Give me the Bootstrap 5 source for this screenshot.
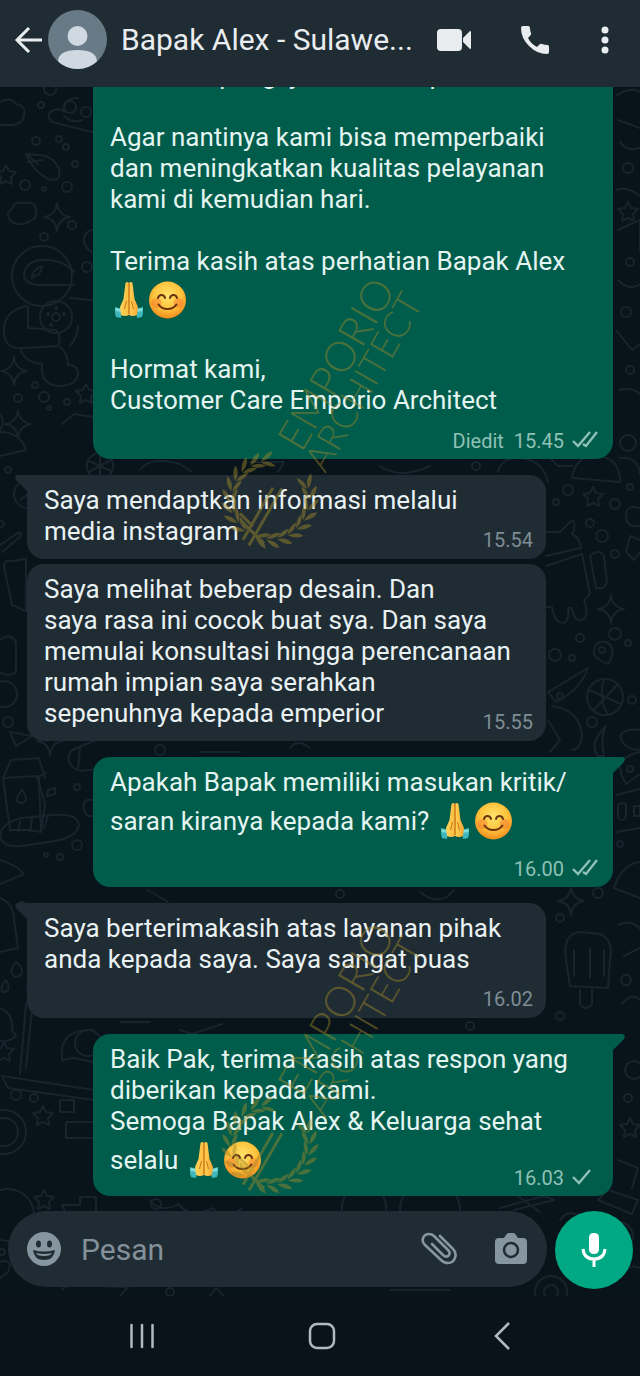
<!DOCTYPE html>
<html lang="id">
<head>
<meta charset="utf-8">
<meta name="viewport" content="width=device-width, initial-scale=1">
<title>Bapak Alex</title>
<link href="https://cdn.jsdelivr.net/npm/bootstrap@5.3.0/dist/css/bootstrap.min.css" rel="stylesheet">
<style>
  body { background: #08131a; font-family: Roboto, "Liberation Sans", sans-serif; color: #e9f1f3; }
  .topbar { height: 87px; background: #202c33; padding: 0 7px 8px 12px; }
  .topbar h1 { font-size: 30px; line-height: 40px; margin-left: 14px; font-weight: 400; color: #e9edef; }
  .icon-btn { border: 0; background: none; padding: 0; flex: none; display: flex; align-items: center; justify-content: center; color: #e9edef; }
  .w-back { width: 36px; } .w-video { width: 82px; } .w-call { width: 80px; } .w-more { width: 60px; }
  .w-72 { width: 72px; } .w-nav { width: 180px; height: 80px; }
  .chat { min-height: 0; background: #08131a; }
  .wallpaper { fill: none; stroke: #18242c; stroke-width: 2; stroke-linejoin: round; stroke-linecap: round; }
  .log { min-height: 0; gap: 16px; padding: 0 27px 15px; }
  .bubble { position: relative; flex: none; border-radius: 17px; padding: 10px 13px 10px 17px; font-size: 26px; line-height: 31px; }
  .bubble::after { content: ""; display: block; clear: both; }
  .sent { background: #005c4b; margin-left: 66px; padding-right: 15px; color: #e4f4f1; }
  .got { background: #202c33; margin-right: 67px; }
  .follow { margin-top: -11px; }
  .tail-r { border-top-right-radius: 0; }
  .tail-l { border-top-left-radius: 0; }
  .tail-r::before, .tail-l::before { content: ""; position: absolute; top: 0; width: 13px; height: 17px; }
  .tail-r::before { left: 100%; background: #005c4b; clip-path: polygon(0 0, 10px 0, 12px 2px, 11px 5px, 0 16px); }
  .tail-l::before { right: 100%; background: #202c33; clip-path: polygon(13px 0, 3px 0, 1px 2px, 2px 5px, 13px 16px); }
  .stamp { float: right; height: 18px; margin-top: 15px; padding-left: 16px; font-size: 20px; line-height: 18px; color: #7f8d95; }
  .sent .stamp { color: #8fc1b6; }
  .stamp.low { margin-top: 31px; }
  .stamp svg { width: 26px; height: 18px; margin-left: 3px; vertical-align: -1px; }
  .emo { width: 38px; height: 46px; vertical-align: -14px; }
  .mark-svg { position: absolute; left: 222px; width: 204px; height: 284px; pointer-events: none; overflow: visible; fill: #a08a2c; stroke: none; opacity: .46; }
  .mark-a { top: 183px; } .mark-b { top: 828px; }
  .mark-svg .big-line { font: 300 42px Lato, sans-serif; }
  .mark-svg .low-line { font: 300 37px Lato, sans-serif; }
  .composer { padding: 0 7px 7px 8px; gap: 8px; }
  .pill { height: 76px; border-radius: 38px; background: #202c33; min-width: 0; }
  .pill .icon-btn { color: #8696a0; height: 76px; }
  .pill input { border: 0; background: none; outline: 0; padding: 1px 1px 0; min-width: 0; font-size: 30px; color: #e9edef; }
  .pill input::placeholder { color: #83919a; opacity: 1; }
  .mic { width: 78px; height: 78px; border-radius: 50%; background: #00a884; color: #fff; }
  .sysbar { height: 80px; background: #0b131a; padding-left: 4px; }
  .sysbar .icon-btn { color: #b4b9bf; }
</style>
</head>
<body>
<svg width="0" height="0" class="position-absolute" aria-hidden="true">
  <defs>
    <radialGradient id="gFace" cx=".5" cy=".38" r=".62"><stop offset="0" stop-color="#ffe36b"/><stop offset=".6" stop-color="#fdc33c"/><stop offset="1" stop-color="#f28c1c"/></radialGradient>
    <linearGradient id="gHand" x1="0" x2="1"><stop offset="0" stop-color="#ffd45a"/><stop offset=".45" stop-color="#fbc043"/><stop offset=".5" stop-color="#dd8a22"/><stop offset=".56" stop-color="#ffce50"/><stop offset="1" stop-color="#f5a732"/></linearGradient>
    <symbol id="smile" viewBox="0 0 38 46">
      <circle cx="19.500" cy="23" r="18.500" fill="url(#gFace)"/>
      <circle cx="8.500" cy="26" r="5" fill="#f4682c" opacity=".4"/><circle cx="30.500" cy="26" r="5" fill="#f4682c" opacity=".4"/>
      <path d="M10 21c1-4 6-4 7 0M22 21c1-4 6-4 7 0M10.500 27.500c4 6 14 6 18 0" fill="none" stroke="#6b3410" stroke-width="2" stroke-linecap="round"/>
    </symbol>
    <symbol id="pray" viewBox="0 0 38 46">
      <path d="M5 30l7 2-1 9-5-1-1-4z M33 30l-7 2 1 9 5-1 1-4z" fill="#3fb8bd"/>
      <path d="M5.500 31l6 1 0 3-6-1zM32.500 31l-6 1 0 3 6-1z" fill="#7fdcd8"/>
      <path d="M15.500 6q2-2 3.500 0q1.500-2 3.500 0l2 16 3.500 8-1 8q-4 2-8 0q-4 2-8 0l-1-8 3.500-8z" fill="url(#gHand)"/>
      <path d="M19 6v31M16.500 24l-2 8M21.500 24l2 8" stroke="#c9741b" stroke-width="1" fill="none"/>
    </symbol>
    <symbol id="ticks2" viewBox="0 0 26 18"><path d="M1 10l5 5L18 1M11 13l3 2L25 1" fill="none" stroke="currentColor" stroke-width="2.400"/></symbol>
    <symbol id="tick1" viewBox="0 0 26 18"><path d="M1 9l6 6L18 2" fill="none" stroke="currentColor" stroke-width="2.400"/></symbol>
    <g id="leafpair"><path d="M-4-42Q2-51 10-51Q7-43-4-42ZM-4-41Q3-34 11-35Q6-42-4-41Z"/></g>
    <g id="branch">
      <use href="#leafpair" transform="rotate(-76)"/><use href="#leafpair" transform="rotate(-60)"/><use href="#leafpair" transform="rotate(-44)"/><use href="#leafpair" transform="rotate(-28)"/><use href="#leafpair" transform="rotate(-12)"/><use href="#leafpair" transform="rotate(4)"/><use href="#leafpair" transform="rotate(20)"/><use href="#leafpair" transform="rotate(36)"/><use href="#leafpair" transform="rotate(52)"/>
    </g>
    <g id="emblem">
      <g transform="scale(.94)"><use href="#branch"/><use href="#branch" transform="scale(1 -1)"/></g>
      <path d="M-48-5H12v3H-48zM-50 3H16v3H-50zM-34-16l3 1-8 32-3-1zM-28-20l3 1-5 18-3-1z"/>
    </g>
    <path id="spark" d="M0-14Q1-2 13 0Q1 2 0 14Q-1 2-13 0Q-1-2 0-14Z"/>
    <path id="star" d="M0-10l3 6 7 1-5 5 1 7-6-3-6 3 1-7-5-5 7-1Z"/>
  </defs>
</svg>

<div class="d-flex flex-column vh-100 overflow-hidden">
  <header class="topbar d-flex align-items-center flex-shrink-0">
    <button class="icon-btn w-back justify-content-start" aria-label="Kembali"><svg width="32" height="28" viewBox="0 0 32 28" fill="none" stroke="currentColor" stroke-width="3"><path d="M30 14H5M17 2L5 14l12 12"/></svg></button>
    <svg class="flex-shrink-0" width="59" height="59" viewBox="0 0 59 59" role="img" aria-label="Foto profil"><defs><clipPath id="cAv"><circle cx="29.500" cy="29.500" r="29.500"/></clipPath></defs><g clip-path="url(#cAv)"><path fill="#687a86" d="M0 0h59v59H0z"/><circle cx="29.500" cy="26" r="10" fill="#d0d9e1"/><path d="M10 52q0-12 19.500-12T49 52v8H10z" fill="#d0d9e1"/></g></svg>
    <h1 class="flex-grow-1 mb-0 text-nowrap">Bapak Alex - Sulawe...</h1>
    <button class="icon-btn w-video" aria-label="Panggilan video"><svg width="34" height="24" viewBox="0 0 34 24" fill="currentColor"><rect y="1" width="25" height="22" rx="4"/><path d="M26 10l7-7q1 0 1 1v16q0 1-1 1l-7-7z"/></svg></button>
    <button class="icon-btn w-call" aria-label="Panggilan suara"><svg width="30" height="30" viewBox="0 0 30 30" fill="currentColor"><path d="M3 1h5q2 0 2 2 0 3 1 5 .5 1.500-.7 2.600L8 13q3 6 9 9l2.500-2.500Q20.600 18.400 22 19q2.500 1 5.500 1 1.500 0 1.500 2v5q0 2-2 2Q17 29 9 21T1 3q0-2 2-2z"/></svg></button>
    <button class="icon-btn w-more" aria-label="Menu"><svg width="8" height="28" viewBox="0 0 8 28" fill="currentColor"><circle cx="4" cy="4" r="3.500"/><circle cx="4" cy="14" r="3.500"/><circle cx="4" cy="24" r="3.500"/></svg></button>
  </header>

  <main class="chat position-relative flex-grow-1 d-flex flex-column overflow-hidden">
    <svg class="wallpaper position-absolute top-0 start-0 w-100 h-100" viewBox="0 87 640 1209" preserveAspectRatio="xMidYMid slice" aria-hidden="true">
      <!-- left edge -->
      <path d="M0 102q10-6 16 2q10 2 8 10q0 10-12 11H0M52 122q-8-8 2-12q8-2 10 2q-2-14 14-14M52 122l40 10M64 116q8 8 18 4"/>
      <circle cx="70" cy="107" r="6"/><circle cx="86" cy="112" r="5"/><circle cx="50" cy="89" r="6"/><circle cx="41" cy="105" r="3"/>
      <path d="M26 154q6 16 22 25q14 4 11-10q-6-14-22-14zM28 162l14-2M26 154l12 10"/>
      <circle cx="36" cy="141" r="4"/><circle cx="59" cy="139" r="3"/><circle cx="66" cy="147" r="3"/><circle cx="25" cy="185" r="5"/><circle cx="67" cy="187" r="5"/><circle cx="44" cy="189" r="2"/><circle cx="75" cy="164" r="3"/>
      <use href="#star" x="6" y="175"/><use href="#spark" x="57" y="217"/>
      <path d="M12 222q-8-8 0-13q2-8 12-6q12-2 12 8q2 8-6 10q-8 6-18 1z"/>
      <circle cx="72" cy="225" r="4"/><circle cx="44" cy="237" r="4"/><circle cx="87" cy="267" r="5"/>
      <path d="M92 230q-8 2-8 10t8 12"/>
      <circle cx="42" cy="276" r="30"/><path d="M74 285H40q-14 0-16-9q0-12 14-16q24-2 36 12M32 278q0-8 10-12q-1 10-8 10z"/>
      <circle cx="56" cy="317" r="16"/><circle cx="56" cy="317" r="4"/><circle cx="56" cy="308" r="1"/><circle cx="64" cy="314" r="1"/><circle cx="48" cy="314" r="1"/><circle cx="51" cy="325" r="1"/>
      <path d="M28 306q-26 4-24 28q2 16 20 14l34-2q4-10-2-16l-28-2zM20 348q4 14 22 16q-2 20 16 22q20 0 20-14q-2-8-10-7q0-12-8-18M70 298l22 2M70 346q8-10 8-20"/>
      <use href="#spark" x="14" y="371"/><circle cx="44" cy="397" r="5"/><circle cx="18" cy="398" r="4"/><circle cx="35" cy="385" r="3"/><circle cx="67" cy="402" r="3"/><circle cx="49" cy="408" r="2"/><use href="#star" x="86" y="394"/>
      <use href="#spark" x="18" y="424"/><path d="M0 456l26-6q-6-18-26-18M62 424l12-10 20 3M0 414q6 8 0 16"/><circle cx="100" cy="466" r="13"/><path d="M100 454v24M89 461l22 10M89 472l22-12"/>
      <circle cx="28" cy="494" r="14"/><path d="M28 484v10l-8 6M0 545l18-12q4-2 2 4L2 552M4 566q0-6 8-5l14-2v52l-14-6zM0 520q8 4 0 8"/>
      <circle cx="8" cy="470" r="3"/><circle cx="4" cy="694" r="13"/><circle cx="8" cy="722" r="5"/><path d="M0 640q10-8 16 2v30q-8 6-16 0M10 732l22 4-16 10z"/><use href="#spark" x="50" y="741"/>
      <path d="M3 778l34-2 8 28-4 28-12-2H10zM3 778l8-18 28-2 6 20M41 832l-2-54M38 777l8-4M22 790q-10 12 0 13q8-2 0-13zM48 790l7-2v6l-8 2z"/>
      <path d="M72 750q-6 6-2 14q4 6 12 7l12-2M72 750l24-10M80 748l-2 22"/>
      <path d="M0 836q2-14 22-18l30-3q26-2 27 10q-2 12-24 16l-34 5Q2 848 0 836M18 832l2-10M30 832l2-14M44 828l4-12M92 800q-10-2-8 8t8 8"/>
      <circle cx="77" cy="787" r="3"/><circle cx="77" cy="845" r="5"/><circle cx="60" cy="857" r="3"/><circle cx="46" cy="855" r="2"/><circle cx="22" cy="906" r="4"/>
      <path d="M0 898q14 6 14 22l4 28-18 4M0 860q18 6 24 14L0 884M16 962q-8 10-2 14q6 2 8-4q0-6-6-10M6 980q-8 10-2 12q6 0 4-8zM40 968q4 10 12 11q14-4 12-14M78 968q-6 20 10 24M0 1008q14 6 12 22l4 6q-10 8-16 4"/>
      <circle cx="54" cy="990" r="4"/><circle cx="30" cy="989" r="3"/><use href="#star" x="4" y="1052"/>
      <path d="M20 1074l6-70q2-6 8-5l62 8M26 1068l6-58 64 6M2 1076l92 14M2 1076l6 12 86 12"/><path d="M62 1060q-4-32 32-30M62 1060l12-2 20 4"/><circle cx="88" cy="1043" r="13"/>
      <circle cx="16" cy="1095" r="5"/><circle cx="34" cy="1098" r="4"/><use href="#star" x="43" y="1116"/><circle cx="4" cy="1132" r="22"/><circle cx="4" cy="1132" r="14"/><path d="M60 1100h14v12H60zM66 1122h28v16H66z"/>
      <circle cx="8" cy="1215" r="26"/><use href="#star" x="44" y="1200"/><path d="M62 1205h18v-8h16v20H68zM0 1262q14-4 8 10l-8 6M62 1290q4-6 12-5l54 2-8 9"/><circle cx="2" cy="1252" r="3"/><circle cx="170" cy="1292" r="4"/>
      <!-- gaps between the bubbles -->
      <path d="M150 1200q10 14 28 4q14 16 34 4q14 14 30 0M140 470q10-14 40-6l12 8M250 462h34l-6 10M380 466q20 14 50 0M148 890l20 12M200 752h40M290 748q8-10 20 0M420 892q20 16 34-2M180 1030l12 4 30-10M120 1022h30"/>
      <circle cx="156" cy="1204" r="5"/><circle cx="364" cy="1207" r="22"/><circle cx="430" cy="1210" r="30"/><path d="M500 1208l44-12 10 4-40 10"/><circle cx="476" cy="466" r="4"/><circle cx="340" cy="894" r="4"/><circle cx="160" cy="750" r="5"/><circle cx="470" cy="1026" r="4"/>
      <!-- right edge -->
      <path d="M616 96q14-10 24-4M618 120l22 8M620 142q6 10 20 6M616 190q12-4 24 6M618 230l22-10v30M618 280q12 12 22 4M616 330l16 20 8-6M620 390q10-4 20 4"/><circle cx="628" cy="168" r="5"/><circle cx="630" cy="262" r="4"/><circle cx="626" cy="312" r="5"/><circle cx="630" cy="370" r="4"/><use href="#star" x="628" y="212"/>
      <path d="M572 478q4-24 26-22q22 2 22 26zM620 458q18-2 20 16M546 454l12 12h14M498 472q4-16 24-14q22 4 26 24"/>
      <circle cx="628" cy="443" r="8"/><use href="#star" x="593" y="497"/><circle cx="568" cy="490" r="5"/><circle cx="615" cy="504" r="5"/><circle cx="630" cy="487" r="3"/><circle cx="602" cy="536" r="6"/><circle cx="590" cy="523" r="4"/><circle cx="615" cy="554" r="4"/><circle cx="556" cy="502" r="3"/>
      <path d="M546 532h14l10-10q6-4 4 8l-2 4q8 4 9 14l-35 8M546 566l36-12 8 40-6 6q6 18-2 20q-8 2-10-12h-4q2 12-4 15q-10 0-12-16h-6M590 556q8-8 14 0l3 26q-2 8-11 6zM640 508q-14-4-14 8t14 10M640 540l-10-4-4 16 8 8 6-8"/>
      <use href="#spark" x="611" y="609"/><circle cx="615" cy="634" r="6"/><circle cx="580" cy="638" r="4"/><circle cx="555" cy="655" r="6"/><circle cx="572" cy="658" r="3"/><circle cx="628" cy="643" r="3"/>
      <path d="M608 664q-16-6-14-14q2-10 12-8q12 6 2 22z"/><circle cx="602" cy="650" r="3"/>
      <circle cx="605" cy="697" r="18"/><path d="M589 690l32 14M594 710l24-26M604 679q-6 20 4 36"/>
      <path d="M548 692l40-24q-8 22-32 34zM552 706q28 4 30 30q-2 14-10 14M548 720l12 20-10 12M606 726q-18 18-8 30h6q-4-18 2-30M640 730q-16-2-20 6q4 14 20 14"/><circle cx="592" cy="722" r="5"/><circle cx="560" cy="696" r="3"/><circle cx="632" cy="700" r="4"/>
      <path d="M640 752q-18 4-20 14q0 8 6 18l14-10M616 795l24-6M616 832l24-4M618 805q4-4 8 0v12q-4 6-8 0zM634 806h6v10h-6z"/><circle cx="630" cy="769" r="3"/><circle cx="620" cy="844" r="3"/>
      <path d="M614 888q8-24 26-26M614 888l26 10"/><use href="#spark" x="571" y="901"/><circle cx="598" cy="893" r="5"/><circle cx="560" cy="918" r="4"/>
      <path d="M566 960q-4-26 14-28l20 2q14 6 10 26l-2 28-38-2zM574 950v26M590 948v30M604 950v26M580 990v14q6 8 12 0v-14M618 925q14-6 22 4M624 956l16-8M622 1004q10-12 18-4"/><circle cx="560" cy="1016" r="4"/><circle cx="626" cy="980" r="5"/><circle cx="634" cy="1070" r="9"/><circle cx="628" cy="1098" r="4"/><use href="#star" x="630" y="1128"/><path d="M618 1160l20 8-6 20M560 1220q10-14 24 0M598 1200l34 14 6-14-30-10zM622 1222q14 6 10 20M540 1212l-22-16"/>
      <circle cx="551" cy="1292" r="7"/><circle cx="551" cy="1292" r="16"/><path d="M618 1280q10-18 22-12M390 1290h60M210 1296l6-8 8 8"/>
    </svg>

    <div class="log position-relative flex-grow-1 d-flex flex-column justify-content-end overflow-hidden">
      <div class="bubble sent">Untuk itu pengajuan desain pada<br><br>Agar nantinya kami bisa memperbaiki<br>dan meningkatkan kualitas pelayanan<br>kami di kemudian hari.<br><br>Terima kasih atas perhatian Bapak Alex<br><svg class="emo" role="img" aria-label="🙏"><use href="#pray"/></svg><svg class="emo" role="img" aria-label="😊"><use href="#smile"/></svg><br><br>Hormat kami,<br>Customer Care Emporio Architect<span class="stamp">Diedit&nbsp; 15.45 <svg><use href="#ticks2"/></svg></span></div>
      <div class="bubble got tail-l">Saya mendaptkan informasi melalui<br>media instagram<span class="stamp">15.54</span></div>
      <div class="bubble got follow">Saya melihat beberap desain. Dan<br>saya rasa ini cocok buat sya. Dan saya<br>memulai konsultasi hingga perencanaan<br>rumah impian saya serahkan<br>sepenuhnya kepada emperior<span class="stamp">15.55</span></div>
      <div class="bubble sent tail-r">Apakah Bapak memiliki masukan kritik/<br>saran kiranya kepada kami? <svg class="emo" role="img" aria-label="🙏"><use href="#pray"/></svg><svg class="emo" role="img" aria-label="😊"><use href="#smile"/></svg><span class="stamp">16.00 <svg><use href="#ticks2"/></svg></span></div>
      <div class="bubble got tail-l">Saya berterimakasih atas layanan pihak<br>anda kepada saya. Saya sangat puas<span class="stamp">16.02</span></div>
      <div class="bubble sent tail-r">Baik Pak, terima kasih atas respon yang<br>diberikan kepada kami.<br>Semoga Bapak Alex &amp; Keluarga sehat<br>selalu <svg class="emo" role="img" aria-label="🙏"><use href="#pray"/></svg><svg class="emo" role="img" aria-label="😊"><use href="#smile"/></svg><span class="stamp low">16.03 <svg><use href="#tick1"/></svg></span></div>
    </div>

    <svg class="mark-svg mark-a" viewBox="222 270 204 284"><g transform="translate(270 500) rotate(-60)"><use href="#emblem"/><text class="big-line" x="56" y="4">EMPORIO</text><text class="low-line" x="50" y="35">ARCHITECT</text></g></svg>
    <svg class="mark-svg mark-b" viewBox="222 270 204 284"><g transform="translate(270 500) rotate(-60)"><use href="#emblem"/><text class="big-line" x="56" y="4">EMPORIO</text><text class="low-line" x="50" y="35">ARCHITECT</text></g></svg>

    <form class="composer position-relative d-flex flex-shrink-0">
      <div class="pill d-flex align-items-center flex-grow-1">
        <button type="button" class="icon-btn w-72" aria-label="Emoji"><svg width="34" height="34" viewBox="0 0 34 34"><circle cx="17" cy="17" r="17" fill="currentColor"/><g fill="#202c33"><ellipse cx="11.500" cy="12" rx="2.500" ry="3.500"/><ellipse cx="22.500" cy="12" rx="2.500" ry="3.500"/><path d="M6 18q11 3 22 0-1 10-11 10T6 18z"/></g><path d="M9 21q8 2 16 0-1 3-8 3t-8-3z" fill="currentColor"/></svg></button>
        <input type="text" class="flex-grow-1" placeholder="Pesan" aria-label="Pesan">
        <button type="button" class="icon-btn w-72" aria-label="Lampirkan"><svg width="36" height="34" viewBox="0 0 36 34" fill="none" stroke="currentColor" stroke-width="2.600" stroke-linecap="round" stroke-linejoin="round"><path d="M19 4l13 13c5 5 2 14-5 14-3 0-5-1-7-3L4 13C-1 8 3 2 8 2c2 0 4 1 5 2l14 14c4 4-1 9-5 5L11 12"/></svg></button>
        <button type="button" class="icon-btn w-72" aria-label="Kamera"><svg width="34" height="32" viewBox="0 0 34 32"><path d="M5 5h5l2-3q1-2 3-2h4q2 0 3 2l2 3h5q4 0 4 4v18q0 4-4 4H5q-4 0-4-4V9q0-4 4-4z" fill="currentColor"/><circle cx="17" cy="17" r="7" fill="none" stroke="#202c33" stroke-width="2.500"/></svg></button>
      </div>
      <button type="button" class="icon-btn mic" aria-label="Pesan suara"><svg width="26" height="36" viewBox="0 0 26 36"><rect x="8" y="1" width="10" height="21" rx="4.500" fill="currentColor"/><path d="M2 17q1 10 11 10t11-10M13 27v8" fill="none" stroke="currentColor" stroke-width="3"/></svg></button>
    </form>
  </main>

  <nav class="sysbar d-flex justify-content-center flex-shrink-0" aria-label="Navigasi">
    <button class="icon-btn w-nav" aria-label="Terbaru"><svg width="26" height="26" viewBox="0 0 26 26" fill="none" stroke="currentColor" stroke-width="2.500" stroke-linecap="round"><path d="M2.500 2v22M13 2v22M23.500 2v22"/></svg></button>
    <button class="icon-btn w-nav" aria-label="Beranda"><svg width="28" height="28" viewBox="0 0 28 28" fill="none" stroke="currentColor" stroke-width="2.500"><rect x="2" y="2" width="24" height="24" rx="7"/></svg></button>
    <button class="icon-btn w-nav" aria-label="Kembali"><svg width="16" height="28" viewBox="0 0 16 28" fill="none" stroke="currentColor" stroke-width="2.500"><path d="M15 1L2 14l13 13"/></svg></button>
  </nav>
</div>
<script src="https://cdn.jsdelivr.net/npm/bootstrap@5.3.0/dist/js/bootstrap.bundle.min.js"></script>
</body>
</html>
